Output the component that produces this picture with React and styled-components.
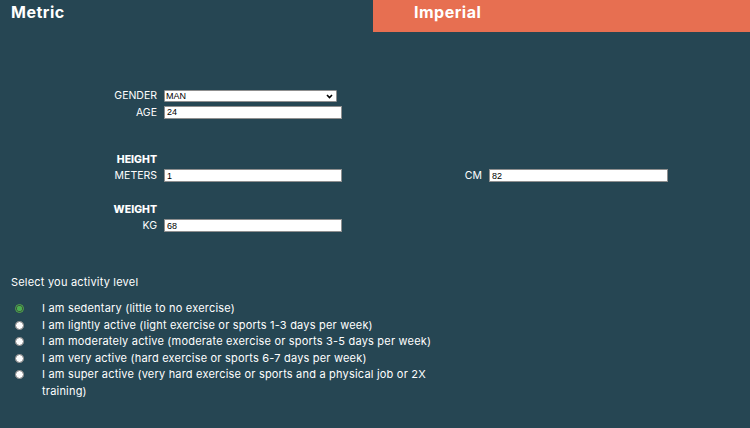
import styled, { createGlobalStyle } from 'styled-components'

const GlobalStyle = createGlobalStyle`
  html, body {
    margin: 0;
    padding: 0;
    background: #264653;
  }
  body {
    font-family: Inter, "Noto Sans", sans-serif;
    color: #ffffff;
  }
`

const Page = styled.div`
  width: 750px;
  min-height: 428px;
  background: #264653;
`

const Tabs = styled.div`
  display: grid;
  grid-template-columns: 373px 1fr;
  height: 32px;
`

const Tab = styled.div`
  background: ${(p) => (p.active ? '#264653' : '#e76f51')};
  padding: 3px 0 0 ${(p) => p.pad}px;
  font-size: 16px;
  font-weight: 700;
  line-height: 18px;
  letter-spacing: 0.5px;
`

const Form = styled.form`
  padding-top: 57px;
`

const Row = styled.div`
  display: flex;
  align-items: center;
  height: ${(p) => p.h || 15}px;
`

const Label = styled.label`
  width: ${(p) => p.w || 164}px;
  padding-right: 7px;
  box-sizing: border-box;
  text-align: right;
  font-size: 10.5px;
  line-height: 13px;
`

const Heading = styled.div`
  width: 157px;
  text-align: right;
  font-size: 10.5px;
  font-weight: 800;
  line-height: 13px;
  margin-top: ${(p) => p.top}px;
  margin-bottom: 2px;
`

const Field = styled.input`
  width: ${(p) => p.w || 178}px;
  height: 13px;
  box-sizing: border-box;
  border: 1px solid #8f8f8f;
  background: #fff;
  padding: 0 2px;
  font-family: "Liberation Sans", Arial, sans-serif;
  font-size: 9px;
  color: #000;
  outline: none;
`

const SelectWrap = styled.div`
  position: relative;
  width: 173px;
  height: 12px;
`

const Select = styled.select`
  display: block;
  appearance: none;
  width: 100%;
  height: 12px;
  margin: 0;
  box-sizing: border-box;
  border: 1px solid #8f8f8f;
  border-radius: 1px;
  background: #fff;
  padding: 0 1px;
  font-family: "Liberation Sans", Arial, sans-serif;
  font-size: 9px;
  line-height: 10px;
  color: #000;
  outline: none;
`

const Chevron = styled.svg`
  position: absolute;
  right: 4px;
  top: 4px;
  width: 7px;
  height: 5px;
  pointer-events: none;
`

const Activity = styled.div`
  padding: 42px 0 0 11px;
`

const Prompt = styled.p`
  margin: 0 0 11px;
  font-size: 11px;
  line-height: 14px;
  letter-spacing: 0.2px;
`

const Option = styled.label`
  display: flex;
  align-items: flex-start;
  font-size: 11px;
  line-height: 16.5px;
  letter-spacing: 0.2px;
`

const Radio = styled.input`
  width: 9px;
  height: 9px;
  margin: 4px 18px 0 4px;
  flex-shrink: 0;
  accent-color: #4caf50;
`

const OptionText = styled.span`
  width: 400px;
`

const levels = [
  'I am sedentary (little to no exercise)',
  'I am lightly active (light exercise or sports 1-3 days per week)',
  'I am moderately active (moderate exercise or sports 3-5 days per week)',
  'I am very active (hard exercise or sports 6-7 days per week)',
  'I am super active (very hard exercise or sports and a physical job or 2X training)',
]

const App = () => {
  return (
    <Page>
      <GlobalStyle />
      <Tabs>
        <Tab active pad={11}>Metric</Tab>
        <Tab pad={41}>Imperial</Tab>
      </Tabs>
      <Form>
        <Row h={13}>
          <Label>GENDER</Label>
          <SelectWrap>
            <Select defaultValue="man">
              <option value="man">MAN</option>
              <option value="woman">WOMAN</option>
            </Select>
            <Chevron viewBox="0 0 7 5">
              <path d="M1 1l2.5 2.5L6 1" fill="none" stroke="#000" strokeWidth="1.6" />
            </Chevron>
          </SelectWrap>
        </Row>
        <Row h={20}>
          <Label>AGE</Label>
          <Field defaultValue="24" />
        </Row>
        <Heading top={31}>HEIGHT</Heading>
        <Row>
          <Label>METERS</Label>
          <Field defaultValue="1" />
          <Label w={147}>CM</Label>
          <Field w={179} defaultValue="82" />
        </Row>
        <Heading top={20}>WEIGHT</Heading>
        <Row>
          <Label>KG</Label>
          <Field defaultValue="68" />
        </Row>
      </Form>
      <Activity>
        <Prompt>Select you activity level</Prompt>
        {levels.map((text, i) => (
          <Option key={i}>
            <Radio type="radio" name="activity" defaultChecked={i === 0} />
            <OptionText>{text}</OptionText>
          </Option>
        ))}
      </Activity>
    </Page>
  )
}

export default App
